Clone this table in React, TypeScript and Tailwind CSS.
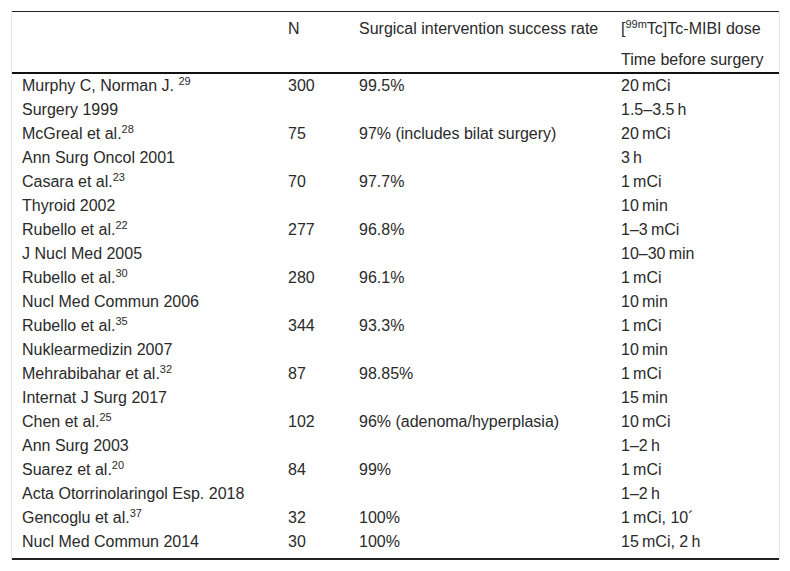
import React from "react";

type Line = { c1: React.ReactNode; c2?: string; c3?: string; c4?: string };

const T = "\u2009";

const Sup = ({ children }: { children: React.ReactNode }) => (
  <sup className="text-[11px] relative -top-[6px] align-baseline">{children}</sup>
);

const lines: Line[] = [
  { c1: <>Murphy C, Norman J. <Sup>29</Sup></>, c2: "300", c3: "99.5%", c4: `20${T}mCi` },
  { c1: "Surgery 1999", c4: `1.5–3.5${T}h` },
  { c1: <>McGreal et al.<Sup>28</Sup></>, c2: "75", c3: "97% (includes bilat surgery)", c4: `20${T}mCi` },
  { c1: "Ann Surg Oncol 2001", c4: `3${T}h` },
  { c1: <>Casara et al.<Sup>23</Sup></>, c2: "70", c3: "97.7%", c4: `1${T}mCi` },
  { c1: "Thyroid 2002", c4: `10${T}min` },
  { c1: <>Rubello et al.<Sup>22</Sup></>, c2: "277", c3: "96.8%", c4: `1–3${T}mCi` },
  { c1: "J Nucl Med 2005", c4: `10–30${T}min` },
  { c1: <>Rubello et al.<Sup>30</Sup></>, c2: "280", c3: "96.1%", c4: `1${T}mCi` },
  { c1: "Nucl Med Commun 2006", c4: `10${T}min` },
  { c1: <>Rubello et al.<Sup>35</Sup></>, c2: "344", c3: "93.3%", c4: `1${T}mCi` },
  { c1: "Nuklearmedizin 2007", c4: `10${T}min` },
  { c1: <>Mehrabibahar et al.<Sup>32</Sup></>, c2: "87", c3: "98.85%", c4: `1${T}mCi` },
  { c1: "Internat J Surg 2017", c4: `15${T}min` },
  { c1: <>Chen et al.<Sup>25</Sup></>, c2: "102", c3: "96% (adenoma/hyperplasia)", c4: `10${T}mCi` },
  { c1: "Ann Surg 2003", c4: `1–2${T}h` },
  { c1: <>Suarez et al.<Sup>20</Sup></>, c2: "84", c3: "99%", c4: `1${T}mCi` },
  { c1: "Acta Otorrinolaringol Esp. 2018", c4: `1–2${T}h` },
  { c1: <>Gencoglu et al.<Sup>37</Sup></>, c2: "32", c3: "100%", c4: `1${T}mCi, 10´` },
  { c1: "Nucl Med Commun 2014", c2: "30", c3: "100%", c4: `15${T}mCi, 2${T}h` },
];

const cols = "grid grid-cols-[266px_71px_262px_169px]";

export default function App() {
  return (
    <div
      className="w-[790px] h-[571px] bg-white pt-[11px] pl-[11px] text-[16px] text-[#2a2a2a]"
      style={{ fontFamily: '"Liberation Sans", Arial, sans-serif' }}
    >
      <div className="w-[769px] border-x border-x-[#e8e8e8]">
        <div className="border-t border-t-[#222] border-b-2 border-b-[#111]">
          <div className={`${cols} h-[33px] items-center`}>
            <div className="pl-[10px]"></div>
            <div className="pl-[10px]">N</div>
            <div className="pl-[10px] whitespace-nowrap">Surgical intervention success rate</div>
            <div className="pl-[10px] whitespace-nowrap">
              [<Sup>99m</Sup>Tc]Tc-MIBI dose
            </div>
          </div>
          <div className={`${cols} h-[27px] items-center pt-[2px]`}>
            <div className="pl-[10px]"></div>
            <div className="pl-[10px]"></div>
            <div className="pl-[10px]"></div>
            <div className="pl-[10px] whitespace-nowrap">Time before surgery</div>
          </div>
        </div>
        <div className="border-b-2 border-b-[#222] pb-[4px]">
          {lines.map((l, i) => (
            <div key={i} className={`${cols} h-[24px] items-center`}>
              <div className="pl-[10px] whitespace-nowrap">{l.c1}</div>
              <div className="pl-[10px]">{l.c2}</div>
              <div className="pl-[10px] whitespace-nowrap">{l.c3}</div>
              <div className="pl-[10px] whitespace-nowrap">{l.c4}</div>
            </div>
          ))}
        </div>
      </div>
    </div>
  );
}
